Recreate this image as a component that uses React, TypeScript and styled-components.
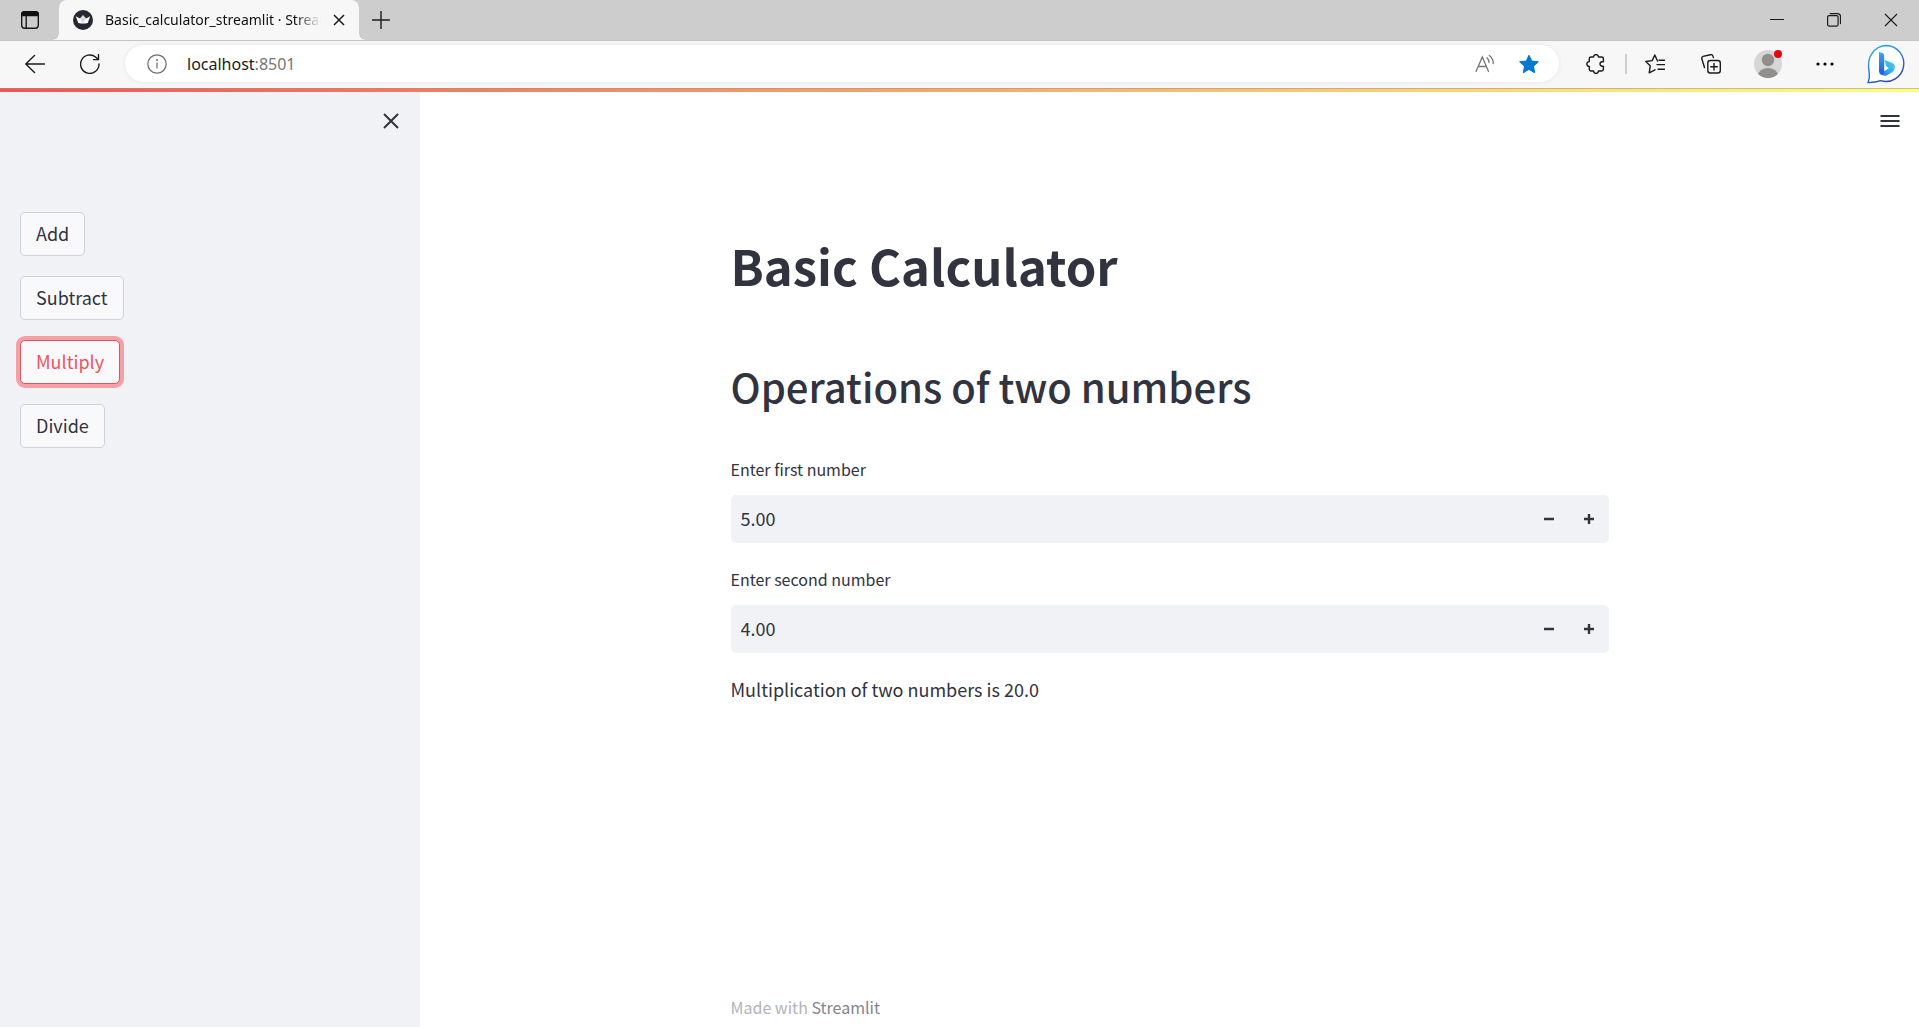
import React, { useState } from "react";
import styled, { createGlobalStyle } from "styled-components";

const sourceSans = `"Source Sans Pro", "Noto Sans CJK SC", sans-serif`;
const chromeSans = `"Segoe UI", "Noto Sans", sans-serif`;

const GlobalStyle = createGlobalStyle`
  *, *::before, *::after { box-sizing: border-box; }
  body { margin: 0; background: #fff; color: #31333f; font-family: ${sourceSans}; }
  button, input { font: inherit; color: inherit; }
  button { cursor: pointer; }
  h1, h2, p { margin: 0; }
  svg { display: block; flex: none; }
`;

const Window = styled.div`
  display: flex;
  flex-direction: column;
  min-height: 100vh;
`;

const TabStrip = styled.header`
  display: flex;
  height: 40px;
  background: #cdcdcd;
  font-family: ${chromeSans};
  color: #111;
`;

const IconButton = styled.button<{ $width: number }>`
  display: flex;
  align-items: center;
  justify-content: center;
  flex: none;
  width: ${(p) => p.$width}px;
  height: 100%;
  padding: 0;
  border: 0;
  background: transparent;
`;

const Tab = styled.div`
  position: relative;
  display: flex;
  align-items: center;
  width: 300px;
  padding: 0 2px 0 14px;
  background: #f7f7f7;
  border-radius: 8px 8px 0 0;

  &::before,
  &::after {
    content: "";
    position: absolute;
    bottom: 0;
    width: 6px;
    height: 6px;
  }
  &::before {
    right: 100%;
    background: radial-gradient(circle at 0 0, transparent 5px, #bdbdbd 5px, #f7f7f7 6px);
  }
  &::after {
    left: 100%;
    background: radial-gradient(circle at 100% 0, transparent 5px, #bdbdbd 5px, #f7f7f7 6px);
  }
`;

const TabTitle = styled.span`
  flex: 1;
  min-width: 0;
  margin-left: 12px;
  overflow: hidden;
  white-space: nowrap;
  font-size: 14px;
  line-height: 20px;
  mask-image: linear-gradient(90deg, #000 88%, transparent 100%);
`;

const WindowControls = styled.div`
  display: flex;
  margin-left: auto;
`;

const Toolbar = styled.nav`
  display: flex;
  align-items: center;
  height: 48px;
  padding: 0 0 2px 8px;
  background: #f7f7f7;
  border-top: 1px solid #c4c4c4;
  font-family: ${chromeSans};
`;

const AddressBar = styled.div`
  display: flex;
  align-items: center;
  flex: 1;
  height: 37px;
  margin: 0 8px;
  padding: 0 8px 0 22px;
  border-radius: 19px;
  background: #fff;
  box-shadow: 0 0 4px rgba(0, 0, 0, 0.08);
`;

const Address = styled.span`
  flex: 1;
  margin-left: 20px;
  font-size: 16px;
  line-height: 24px;
  color: #1b1b1b;
`;

const Port = styled.span`
  color: #767676;
`;

const Divider = styled.span`
  width: 2px;
  height: 20px;
  background: #cfcfcf;
`;

const Decoration = styled.div`
  height: 4px;
  background: linear-gradient(90deg, #f05555, #fffd80);
  border-top: 1px solid rgba(150, 150, 150, 0.55);
`;

const AppBody = styled.div`
  display: flex;
  flex: 1;
`;

const Sidebar = styled.aside`
  display: flex;
  flex-direction: column;
  flex: none;
  width: 420px;
  background: #f0f2f6;
`;

const PanelHeader = styled.div`
  display: flex;
  justify-content: flex-end;
  height: 58px;
`;

const Operations = styled.div`
  display: flex;
  flex-direction: column;
  align-items: flex-start;
  gap: 20px;
  padding: 62px 20px 20px;
`;

const OperationButton = styled.button<{ $active: boolean }>`
  height: 44px;
  padding: 0 15px 2px;
  border: 1px solid ${(p) => (p.$active ? "#e0525c" : "#cfd1d8")};
  border-radius: 5px;
  background: #f9f9fc;
  color: ${(p) => (p.$active ? "#f0525c" : "#31333f")};
  box-shadow: ${(p) => (p.$active ? "0 0 0 4px #f5a0a4" : "none")};
  font-size: 18px;
  line-height: 32px;
`;

const Main = styled.main`
  display: flex;
  flex: 1;
  flex-direction: column;
`;

const Block = styled.div`
  display: flex;
  flex-direction: column;
  gap: 20px;
  width: 100%;
  max-width: 918px;
  margin: 0 auto;
  padding: 58px 20px 0;
`;

const Title = styled.h1`
  padding: 24px 0 21px;
  font-size: 49px;
  font-weight: 700;
  line-height: 66px;
`;

const Subtitle = styled.h2`
  padding: 20px 0;
  font-size: 40px;
  font-weight: 500;
  line-height: 54px;
`;

const Label = styled.label`
  display: block;
  margin-bottom: 10px;
  font-size: 16px;
  line-height: 32px;
`;

const NumberBox = styled.div`
  display: flex;
  height: 48px;
  overflow: hidden;
  border-radius: 5px;
  background: #f0f2f6;
`;

const NumberField = styled.input`
  flex: 1;
  min-width: 0;
  padding: 0 10px 2px;
  border: 0;
  outline: 0;
  background: transparent;
  font-size: 18px;
`;

const Result = styled.p`
  font-size: 18px;
  line-height: 32px;
`;

const Footer = styled.footer`
  width: 100%;
  max-width: 918px;
  margin: auto auto 0;
  padding: 20px 20px 4px;
  font-size: 16px;
  line-height: 32px;
  color: #b2b3b8;
`;

const FooterLink = styled.a`
  color: #83848c;
  text-decoration: none;
`;

const stroke = { fill: "none", stroke: "#1b1b1b", strokeWidth: 1.4, strokeLinecap: "round", strokeLinejoin: "round" } as const;

const TabActionsIcon = () => (
  <svg width="20" height="20" viewBox="0 0 20 20">
    <rect x="1.7" y="1.7" width="16.6" height="16.6" rx="3" {...stroke} />
    <path d="M1 6.3V4.5A3.5 3.5 0 0 1 4.500 1h11A3.500 3.500 0 0 1 19 4.500v1.800Z" fill="#111" />
    <path d="M6.200 6v12" {...stroke} />
  </svg>
);
const CrownIcon = () => (
  <svg width="20" height="20" viewBox="0 0 20 20">
    <circle cx="10" cy="10" r="10" fill="#262730" />
    <path d="M2.800 6.200 7 8.600 10 5.200l3 3.400 4.200-2.400-2.500 6.800q-4.700 1.200-9.400 0Z" fill="#fff" />
    <path d="M7 8.600 10 5.200l3 3.400-3 4.800Z" fill="#d9d9dd" />
  </svg>
);
const CrossIcon = ({ size, weight = 1.4, color = "#1b1b1b" }: { size: number; weight?: number; color?: string }) => (
  <svg width={size} height={size} viewBox={`0 0 ${size} ${size}`}>
    <path d={`M1 1 ${size - 1} ${size - 1}M${size - 1} 1 1 ${size - 1}`} fill="none" stroke={color} strokeWidth={weight} />
  </svg>
);
const NewTabIcon = () => (
  <svg width="18" height="18" viewBox="0 0 18 18"><path d="M9 .5v17M.5 9h17" {...stroke} /></svg>
);
const MinimizeIcon = () => (
  <svg width="14" height="14" viewBox="0 0 14 14"><path d="M.5 6.500h13" {...stroke} strokeWidth={1.200} /></svg>
);
const RestoreIcon = () => (
  <svg width="14" height="14" viewBox="0 0 14 14">
    <rect x=".6" y="2.600" width="10.500" height="10.500" rx="1.500" {...stroke} strokeWidth={1.200} />
    <path d="M3.200.6h7.300a3 3 0 0 1 3 3v7" {...stroke} strokeWidth={1.200} />
  </svg>
);
const BackIcon = () => (
  <svg width="20" height="20" viewBox="0 0 20 20"><path d="M9.500 1.500 .8 10l8.700 8.500M1 10h18.500" {...stroke} /></svg>
);
const ReloadIcon = () => (
  <svg width="20" height="20" viewBox="0 0 20 20"><path d="M19 10a9.200 9.200 0 1 1-3.200-6.800L18.500 5.600M18.500.6v5h-5" {...stroke} /></svg>
);
const InfoIcon = () => (
  <svg width="20" height="20" viewBox="0 0 20 20">
    <circle cx="10" cy="10" r="9.200" fill="none" stroke="#6b6b6b" strokeWidth="1.200" />
    <path d="M10 8.500v6" stroke="#6b6b6b" strokeWidth="1.200" />
    <circle cx="10" cy="6" r="1" fill="#6b6b6b" />
  </svg>
);
const ReadAloudIcon = () => (
  <svg width="20" height="20" viewBox="0 0 20 20" fill="none" stroke="#767676" strokeWidth="1.300" strokeLinecap="round">
    <path d="M1 17.500 7.300 3l6.200 14.500M3.300 12.500h8M12 3.800q2 2 2 4.700M14.300 1.500q4 3.200 4 8" />
  </svg>
);
const StarIcon = () => (
  <svg width="20" height="20" viewBox="0 0 20 20">
    <path d="m10 1.500 2.500 5.600 6.500.7-4.700 4.300 1.200 6.300L10 15.300 4.500 18.400 5.700 12.100 1 7.800l6.500-.7Z" fill="#0078d4" stroke="#0078d4" strokeWidth="1.300" strokeLinejoin="round" />
  </svg>
);
const PuzzleIcon = () => (
  <svg width="20" height="20" viewBox="0 0 20 20">
    <path d="M4.800 3h2.800a2.400 2.400 0 0 1 4.800 0h3.300q1.700 0 1.700 1.700V7.800h-1.200a2.200 2.200 0 0 0 0 4.400h1.200v3.100q0 1.700-1.700 1.700h-3.300a2.400 2.400 0 0 1-4.800 0H4.800q-1.500 0-1.500-1.700v-2.900a2.400 2.400 0 0 1 0-4.800V4.700Q3.300 3 4.800 3Z" {...stroke} />
  </svg>
);
const FavoritesIcon = () => (
  <svg width="20" height="20" viewBox="0 0 20 20">
    <path d="M12.500 7 9.800 1 7.200 6.600.8 7.500l4.400 4.300-1 7 5.800-3M14 6.200h5.500M12 10.600h7.500M13 15.200h6.500" {...stroke} />
  </svg>
);
const CollectionsIcon = () => (
  <svg width="20" height="20" viewBox="0 0 20 20">
    <rect x="6.800" y="6.500" width="12.500" height="12.500" rx="2.500" {...stroke} />
    <path d="M13 9.500v6.500M9.800 12.700h6.500M3.500 13.500.8 4.800q-.4-1.800 1.300-2.400L9.300.7q2-.5 2.600 1.400l.5 1.500" {...stroke} />
  </svg>
);
const AvatarIcon = () => (
  <svg width="28" height="28" viewBox="0 0 28 28">
    <defs><clipPath id="face"><circle cx="14" cy="14" r="14" /></clipPath></defs>
    <circle cx="14" cy="14" r="14" fill="#d6d6d6" />
    <g clipPath="url(#face)" fill="#918f8d"><circle cx="14" cy="10" r="6.200" /><ellipse cx="14" cy="25.500" rx="10" ry="7.500" /></g>
    <circle cx="24" cy="4" r="4" fill="#e30613" />
  </svg>
);
const MoreIcon = () => (
  <svg width="18" height="4" viewBox="0 0 18 4"><circle cx="2" cy="2" r="1.600" /><circle cx="9" cy="2" r="1.600" /><circle cx="16" cy="2" r="1.600" /></svg>
);
const BingIcon = () => (
  <svg width="40" height="40" viewBox="0 0 40 40">
    <defs>
      <linearGradient id="ring" x1="0" y1="0" x2=".6" y2="1"><stop offset="0" stopColor="#28c3dc" /><stop offset=".5" stopColor="#2b7de0" /><stop offset="1" stopColor="#2a43b4" /></linearGradient>
      <linearGradient id="stem" x1="0" y1="0" x2="0" y2="1"><stop offset="0" stopColor="#38a8f0" /><stop offset="1" stopColor="#2058dc" /></linearGradient>
      <linearGradient id="bowl" x1="0" y1="1" x2="1" y2="0"><stop offset="0" stopColor="#2b6be4" /><stop offset=".5" stopColor="#34b0f0" /><stop offset="1" stopColor="#48dcd0" /></linearGradient>
    </defs>
    <path d="M20.500 1.500a18 18 0 1 1-6 35.200Q9 38.800 2 38.500 4 34.500 3.200 29 1 16 6 9.500A18 18 0 0 1 20.500 1.500Z" fill="#fff" stroke="url(#ring)" strokeWidth="1.400" />
    <path d="m18.500 16 8 3q2.800 1.500 2.300 5-.5 3-3 4.500l-5.300 3q-4.500 1.200-6.500-3.500l5.500-1.500 3.500-2.500-2.600-1.500Z" fill="url(#bowl)" />
    <path d="m13 8 3.800 1.300q1.400.7 1.400 2.500v14.700q0 3.500-2 4.800-3.200-1-3.200-4.500Z" fill="url(#stem)" />
  </svg>
);
const MenuIcon = () => (
  <svg width="20" height="14" viewBox="0 0 20 14"><path d="M.5 2h19M.5 7h19M.5 12h19" stroke="#31333f" strokeWidth="2" /></svg>
);
const StepIcon = ({ plus }: { plus?: boolean }) => (
  <svg width="10" height="10" viewBox="0 0 10 10"><path d={plus ? "M0 5h10M5 0v10" : "M0 5h10"} stroke="#31333f" strokeWidth="2.400" /></svg>
);

type NumberInputProps = { id: string; label: string; value: string; onChange: (value: string) => void };

function NumberInput({ id, label, value, onChange }: NumberInputProps) {
  const step = (delta: number) => onChange(((parseFloat(value) || 0) + delta).toFixed(2));
  return (
    <div>
      <Label htmlFor={id}>{label}</Label>
      <NumberBox>
        <NumberField id={id} inputMode="decimal" value={value} onChange={(e) => onChange(e.target.value)} />
        <IconButton $width={40} aria-label="Decrease" onClick={() => step(-0.01)}><StepIcon /></IconButton>
        <IconButton $width={40} aria-label="Increase" onClick={() => step(0.01)}><StepIcon plus /></IconButton>
      </NumberBox>
    </div>
  );
}

const operations: Record<string, { noun: string; run: (a: number, b: number) => number }> = {
  Add: { noun: "Addition", run: (a, b) => a + b },
  Subtract: { noun: "Subtraction", run: (a, b) => a - b },
  Multiply: { noun: "Multiplication", run: (a, b) => a * b },
  Divide: { noun: "Division", run: (a, b) => a / b },
};

export default function App() {
  const [active, setActive] = useState("Multiply");
  const [first, setFirst] = useState("5.00");
  const [second, setSecond] = useState("4.00");
  const value = operations[active].run(parseFloat(first), parseFloat(second));

  return (
    <Window>
      <GlobalStyle />
      <TabStrip>
        <IconButton $width={59} aria-label="Tab actions"><TabActionsIcon /></IconButton>
        <Tab>
          <CrownIcon />
          <TabTitle>Basic_calculator_streamlit · Streamlit</TabTitle>
          <IconButton $width={36} aria-label="Close tab"><CrossIcon size={12} weight={1.5} /></IconButton>
        </Tab>
        <IconButton $width={43} aria-label="New tab"><NewTabIcon /></IconButton>
        <WindowControls>
          <IconButton $width={57} aria-label="Minimize"><MinimizeIcon /></IconButton>
          <IconButton $width={57} aria-label="Restore"><RestoreIcon /></IconButton>
          <IconButton $width={57} aria-label="Close window"><CrossIcon size={14} weight={1.1} /></IconButton>
        </WindowControls>
      </TabStrip>
      <Toolbar>
        <IconButton $width={54} aria-label="Back"><BackIcon /></IconButton>
        <IconButton $width={55} aria-label="Reload"><ReloadIcon /></IconButton>
        <AddressBar>
          <InfoIcon />
          <Address>localhost<Port>:8501</Port></Address>
          <IconButton $width={44} aria-label="Read aloud"><ReadAloudIcon /></IconButton>
          <IconButton $width={44} aria-label="Edit favorite"><StarIcon /></IconButton>
        </AddressBar>
        <IconButton $width={58} aria-label="Extensions"><PuzzleIcon /></IconButton>
        <Divider />
        <IconButton $width={56} aria-label="Favorites"><FavoritesIcon /></IconButton>
        <IconButton $width={56} aria-label="Collections"><CollectionsIcon /></IconButton>
        <IconButton $width={58} aria-label="Profile"><AvatarIcon /></IconButton>
        <IconButton $width={56} aria-label="Settings and more"><MoreIcon /></IconButton>
        <IconButton $width={66} aria-label="Discover"><BingIcon /></IconButton>
      </Toolbar>
      <Decoration />
      <AppBody>
        <Sidebar>
          <PanelHeader>
            <IconButton $width={58} aria-label="Close sidebar"><CrossIcon size={16} weight={2} color="#31333f" /></IconButton>
          </PanelHeader>
          <Operations>
            {Object.keys(operations).map((name) => (
              <OperationButton key={name} $active={name === active} onClick={() => setActive(name)}>{name}</OperationButton>
            ))}
          </Operations>
        </Sidebar>
        <Main>
          <PanelHeader>
            <IconButton $width={58} aria-label="Menu"><MenuIcon /></IconButton>
          </PanelHeader>
          <Block>
            <Title>Basic Calculator</Title>
            <Subtitle>Operations of two numbers</Subtitle>
            <NumberInput id="first" label="Enter first number" value={first} onChange={setFirst} />
            <NumberInput id="second" label="Enter second number" value={second} onChange={setSecond} />
            <Result>{operations[active].noun} of two numbers is {value.toFixed(1)}</Result>
          </Block>
          <Footer>Made with <FooterLink href="#streamlit">Streamlit</FooterLink></Footer>
        </Main>
      </AppBody>
    </Window>
  );
}
